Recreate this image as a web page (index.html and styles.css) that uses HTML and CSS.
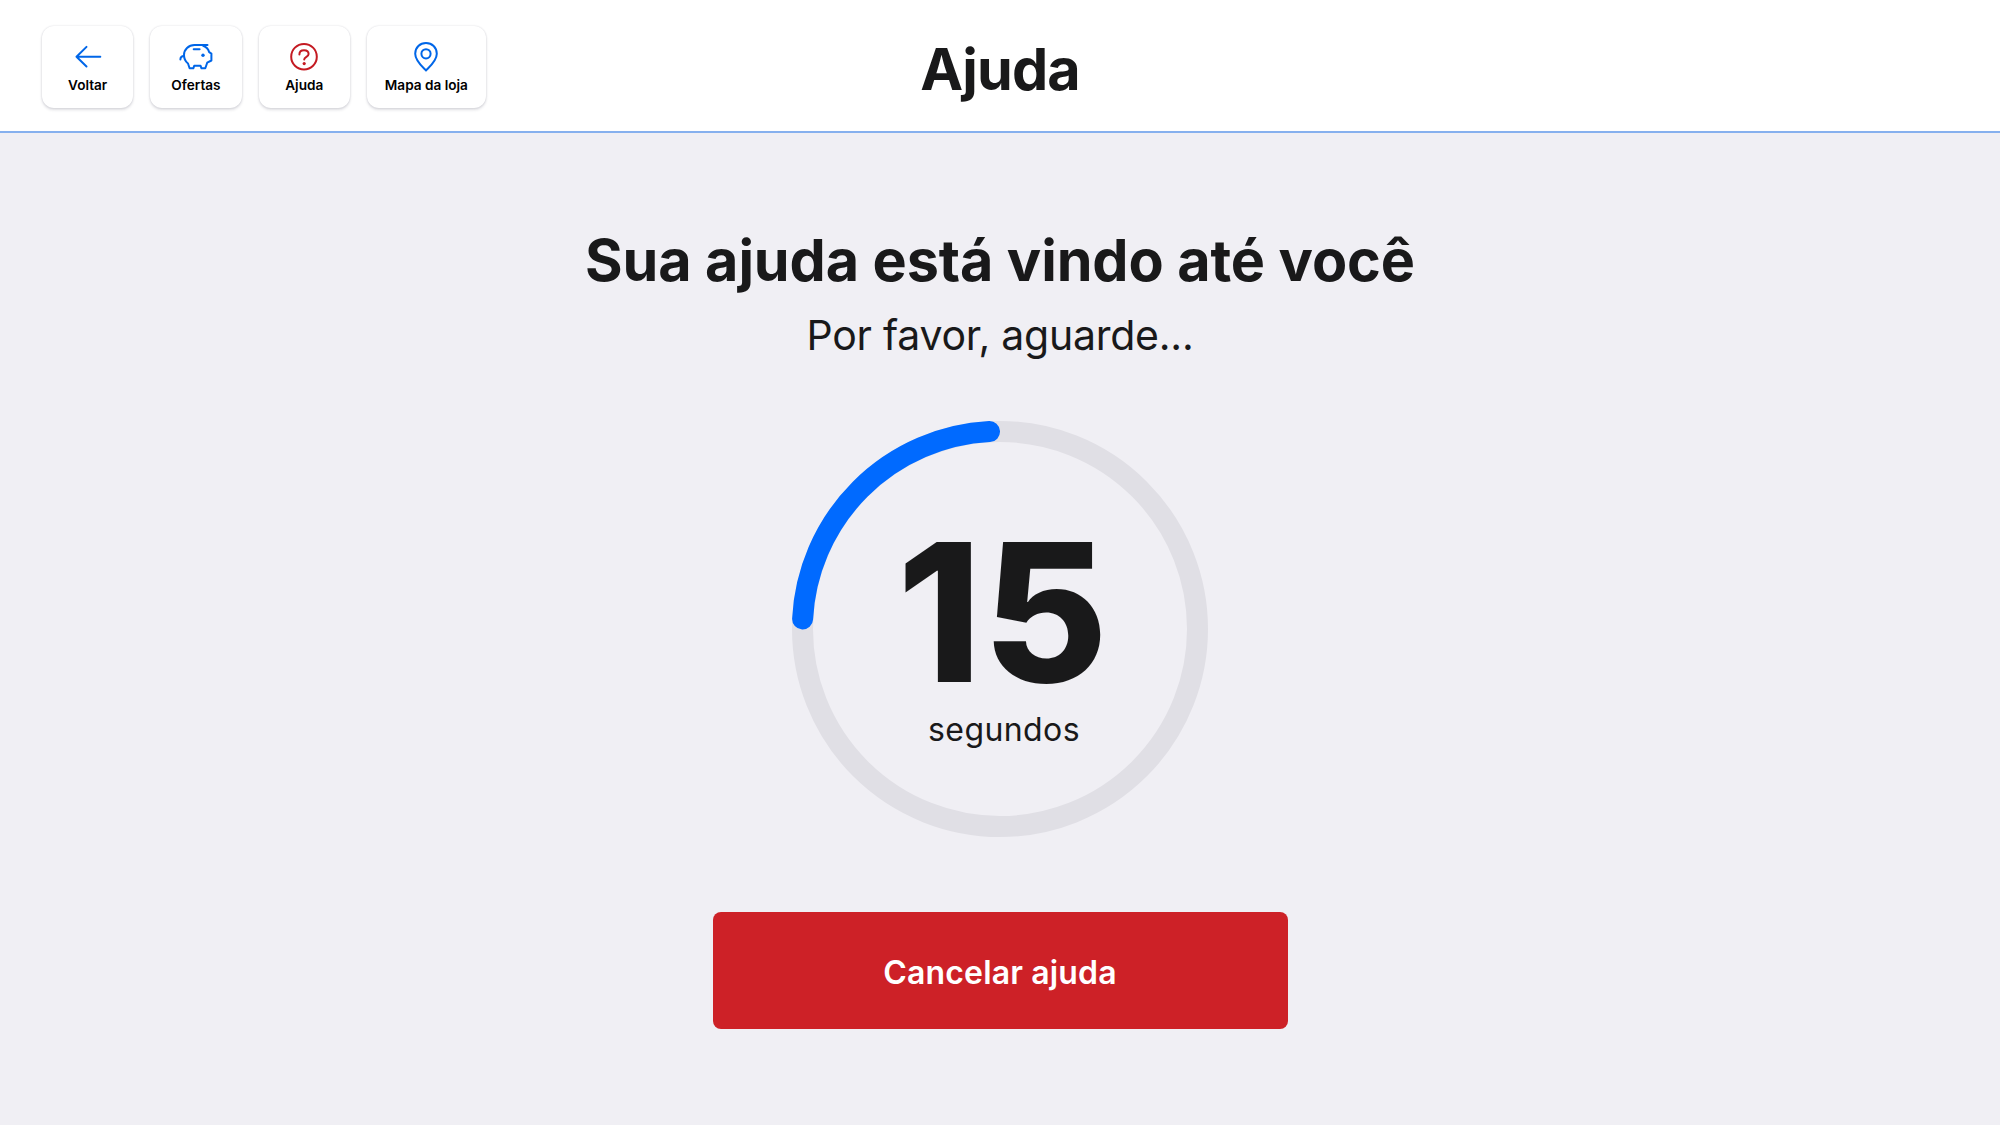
FILE: index.html
```
<!DOCTYPE html>
<html lang="pt-BR">

<head>
    <meta charset="utf-8" />
    <title>Ajuda</title>
    <link rel="stylesheet" href="styles.css">
</head>

<body>
    <header class="header">
        <nav class="nav">
            <button class="nav-btn" type="button">
                <svg class="icon" viewBox="0 0 36 34">
                    <path d="M30.3 17.7H6.5M16.5 7.9L6.5 17.7L16.5 27.5" />
                </svg>
                <span>Voltar</span>
            </button>
            <button class="nav-btn" type="button">
                <svg class="icon" viewBox="0 0 36 34">
                    <path d="M29.5 6H16.5C10.5 6 6 10.5 6 16C6 19.8 7.8 22.8 10 24.5L11.6 29.3H15.3L16.2 26.8H22.6L23.5 29.3H27.3L29.2 23.7L33.4 21.5V14.6L31.2 13.2C30.4 10.3 28.3 8 25.2 6.8" />
                    <path d="M6 17C4 17 2.4 18.4 2.4 20.6M15.7 10.2H21.6" />
                    <circle class="dot" cx="25" cy="16.3" r="1.7" />
                </svg>
                <span>Ofertas</span>
            </button>
            <button class="nav-btn" type="button">
                <svg class="icon icon-red" viewBox="0 0 36 34">
                    <circle cx="18" cy="17.7" r="12.8" />
                    <path d="M13.4 15.4C13.4 12.8 15.3 11.2 18 11.2C20.7 11.2 22.6 12.8 22.6 15C22.6 18 18.2 17.6 18.2 20.6" />
                    <circle class="dot" cx="18.2" cy="24.6" r="1.6" />
                </svg>
                <span>Ajuda</span>
            </button>
            <button class="nav-btn nav-btn-wide" type="button">
                <svg class="icon" viewBox="0 0 36 34">
                    <path d="M18 31.5C14 27.5 7.2 21.8 7.2 14.8C7.2 8.3 12 4 18 4C24 4 28.8 8.3 28.8 14.8C28.8 21.8 22 27.5 18 31.5Z" />
                    <circle cx="18" cy="14.8" r="4.6" />
                </svg>
                <span>Mapa da loja</span>
            </button>
        </nav>
        <h1 class="title">Ajuda</h1>
    </header>

    <main class="main">
        <h2 class="heading">Sua ajuda está vindo até você</h2>
        <p class="wait">Por favor, aguarde...</p>
        <div class="timer">
            <svg class="ring" viewBox="0 0 416 416">
                <circle class="track" cx="208" cy="208" r="197.5" />
                <path class="progress" d="M10.6 198A197.5 197.5 0 0 1 197.5 10.6" />
            </svg>
            <div class="count">
                <span class="number">15</span>
                <span class="unit">segundos</span>
            </div>
        </div>
        <button class="cancel" type="button">Cancelar ajuda</button>
    </main>
</body>

</html>
```
FILE: styles.css
```
* {
    box-sizing: border-box;
}

body {
    margin: 0;
    height: 1125px;
    background-color: #f0eff4;
    color: #19191a;
    font-family: Inter, "Liberation Sans", sans-serif;
}

h1,
h2,
p {
    margin: 0;
}

button {
    border: none;
    font-family: inherit;
}

.header {
    display: grid;
    grid-template-columns: 1fr auto 1fr;
    height: 133px;
    padding: 26px 42px 0;
    background-color: #fff;
    border-bottom: 2px solid #86b0ee;
}

.nav {
    display: flex;
    align-items: flex-start;
    gap: 17px;
}

.nav-btn {
    display: flex;
    flex-direction: column;
    align-items: center;
    width: 91.3px;
    height: 82px;
    padding: 13px 0 0;
    border-radius: 12px;
    background-color: #fff;
    box-shadow: 0 0 2px rgba(30, 30, 60, 0.16), 0 2px 3px rgba(30, 30, 60, 0.14);
    color: #000;
    font-size: 13.6px;
    font-weight: 600;
    line-height: 18px;
}

.nav-btn-wide {
    width: 119px;
}

.icon {
    width: 36px;
    height: 34px;
    margin-bottom: 3px;
    fill: none;
    stroke: #0066e8;
    stroke-width: 2;
    stroke-linecap: round;
    stroke-linejoin: round;
}

.icon-red {
    stroke: #c41a22;
}

.icon .dot {
    fill: #0066e8;
    stroke: none;
}

.icon-red .dot {
    fill: #c41a22;
}

.title {
    padding-top: 8px;
    font-size: 57.5px;
    font-weight: 700;
    line-height: 70px;
    letter-spacing: -0.9px;
}

.main {
    display: flex;
    flex-direction: column;
    align-items: center;
}

.heading {
    margin-top: 92px;
    font-size: 57.5px;
    font-weight: 700;
    line-height: 70px;
    letter-spacing: -0.1px;
}

.wait {
    margin-top: 15px;
    font-size: 41px;
    line-height: 50px;
    letter-spacing: -0.25px;
}

.timer {
    display: grid;
    width: 416px;
    height: 416px;
    margin-top: 61px;
}

.ring,
.count {
    grid-area: 1 / 1;
}

.ring {
    width: 416px;
    height: 416px;
    fill: none;
    stroke-width: 21;
}

.track {
    stroke: #e0dfe5;
}

.progress {
    stroke: #006aff;
    stroke-linecap: round;
}

.count {
    display: flex;
    flex-direction: column;
    align-items: center;
    padding-top: 91px;
}

.number {
    margin-left: 6px;
    font-size: 192px;
    font-weight: 800;
    line-height: 200px;
    letter-spacing: 1px;
}

.unit {
    margin: -2px 0 0 8px;
    font-size: 32px;
    line-height: 40px;
    letter-spacing: 0.4px;
}

.cancel {
    width: 575px;
    height: 117px;
    margin-top: 75px;
    padding-top: 4px;
    border-radius: 8px;
    background-color: #cd2127;
    color: #fff;
    font-size: 32px;
    font-weight: 600;
    letter-spacing: 0.15px;
}
```
